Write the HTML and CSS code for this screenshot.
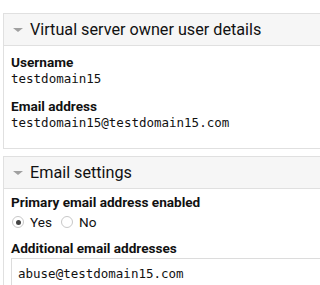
FILE: index.html
```html
<!DOCTYPE html>
<html lang="en">
<head>
    <meta charset="UTF-8">
    <meta name="viewport" content="width=device-width, initial-scale=1.0">
    <title>Virtual server details</title>
    <link rel="stylesheet" href="styles.css">
</head>
<body>
    <div class="panel">
        <div class="panel-head">
            <span class="caret"></span>
            <span class="panel-title">Virtual server owner user details</span>
        </div>
        <div class="panel-body">
            <div class="field">
                <div class="label">Username</div>
                <div class="value">testdomain15</div>
            </div>
            <div class="field">
                <div class="label">Email address</div>
                <div class="value">testdomain15@testdomain15.com</div>
            </div>
        </div>
    </div>

    <div class="panel">
        <div class="panel-head">
            <span class="caret"></span>
            <span class="panel-title">Email settings</span>
        </div>
        <div class="panel-body email-body">
            <div class="field">
                <div class="label">Primary email address enabled</div>
                <div class="radios">
                    <label class="radio"><span class="dot checked"></span>Yes</label>
                    <label class="radio"><span class="dot"></span>No</label>
                </div>
            </div>
            <div class="field">
                <div class="label">Additional email addresses</div>
                <div class="textbox">abuse@testdomain15.com</div>
            </div>
        </div>
    </div>
</body>
</html>
```

FILE: styles.css
```css
body {
    margin: 0;
    padding: 13px 0 0 3px;
    font-family: Roboto, "Noto Sans", sans-serif;
    color: #111;
    background-color: #fff;
    overflow: hidden;
}
.panel {
    border: 1px solid #e0e0e0;
    border-right: none;
    margin-bottom: 7px;
}
.panel-head {
    background-color: #f6f6f6;
    border-bottom: 1px solid #e0e0e0;
    height: 31px;
    display: flex;
    align-items: center;
    padding-left: 9px;
}
.caret {
    width: 0;
    height: 0;
    border-left: 5px solid transparent;
    border-right: 5px solid transparent;
    border-top: 4px solid #a0a0a0;
    margin-right: 7px;
    margin-top: 1px;
}
.panel-title {
    font-size: 16.2px;
}
.panel-body {
    padding: 8px 0 17px 7px;
}
.email-body {
    padding-top: 5px;
}
.field + .field {
    margin-top: 11px;
}
.email-body .field + .field {
    margin-top: 7px;
}
.label {
    font-weight: bold;
    font-size: 13.6px;
    line-height: 17px;
}
.value {
    font-family: "DejaVu Sans Mono", monospace;
    font-size: 12.5px;
    line-height: 16px;
}
.radios {
    display: flex;
    align-items: center;
    font-size: 13.6px;
    line-height: 22px;
}
.radio {
    display: flex;
    align-items: center;
    margin-right: 8px;
}
.dot {
    width: 12px;
    height: 12px;
    border: 1px solid #c8c8c8;
    border-radius: 50%;
    margin: 0 6px 0 1px;
    display: flex;
    align-items: center;
    justify-content: center;
    box-sizing: border-box;
}
.dot.checked:after {
    content: "";
    width: 5px;
    height: 5px;
    border-radius: 50%;
    background-color: #444;
}
.textbox {
    border: 1px solid #dcdcdc;
    border-right: none;
    margin-top: 1px;
    padding: 7px 0 0 6px;
    height: 30px;
    font-family: "DejaVu Sans Mono", monospace;
    font-size: 12.5px;
    line-height: 16px;
}
```
